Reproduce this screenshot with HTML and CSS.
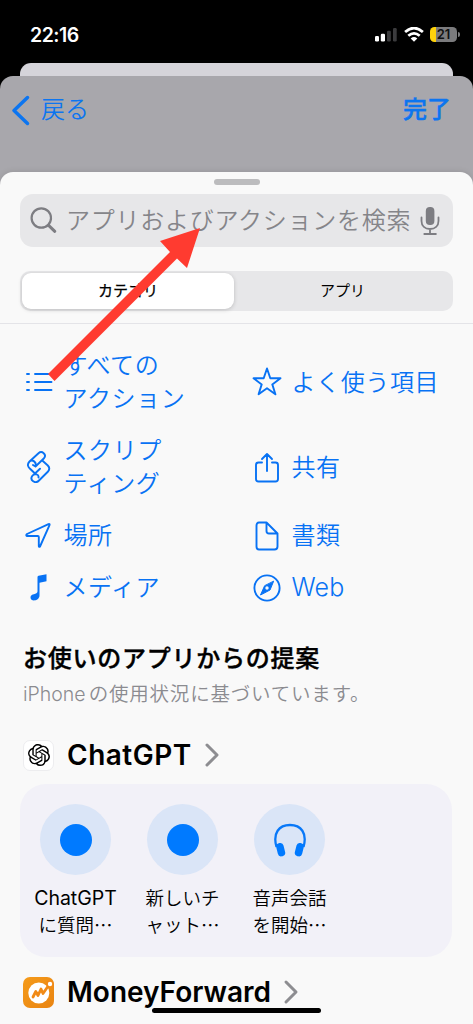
FILE: index.html
```html
<!DOCTYPE html>
<html lang="ja">
<head>
<meta charset="utf-8">
<meta name="viewport" content="width=device-width">
<title>ショートカット</title>
<link rel="stylesheet" href="styles.css">
</head>
<body>
<div class="screen">
  <header class="status">
    <span class="clock">22:16</span>
    <svg class="signal" width="22" height="15" viewBox="0 0 22 15"><rect y="9" width="4" height="5.500" rx="1.200" fill="#fff"/><rect x="5.800" y="6.800" width="4.200" height="7.700" rx="1.200" fill="#fff"/><rect x="12" y="3.800" width="3.800" height="10.700" rx="1.200" fill="#3b3b3d"/><rect x="18" y="1" width="3.700" height="13.500" rx="1.200" fill="#3b3b3d"/></svg>
    <svg class="wifi" width="20" height="15" viewBox="0 0 20 15" fill="none" stroke="#fff" stroke-width="2.700"><path d="M1.100 5.100Q10-3 18.900 5.100"/><path d="M4.300 8.800Q10 3.800 15.700 8.800"/><path d="M10 14.800 6.700 11.500Q10 8.700 13.300 11.500Z" fill="#fff" stroke="none"/></svg>
    <div class="battery"><span>21</span></div>
  </header>
  <div class="sheet-back"></div>
  <div class="card">
  <nav class="nav">
    <a class="back"><svg width="19" height="32" viewBox="0 0 19 32"><path d="M16.500 3.500 3 16.500 16.500 29.500" fill="none" stroke="currentColor" stroke-width="3.500" stroke-linecap="round" stroke-linejoin="round"/></svg><span>戻る</span></a>
    <a class="done">完了</a>
  </nav>
  <main class="sheet">
    <div class="grabber"></div>
    <div class="search">
      <svg width="28" height="28" viewBox="0 0 28 28" fill="none" stroke="#7d7d82" stroke-linecap="round"><circle cx="11.300" cy="11" r="9.700" stroke-width="2.200"/><path d="m18.600 18.300 6.200 6" stroke-width="3"/></svg>
      <span class="placeholder">アプリおよびアクションを検索</span>
      <svg class="mic" width="20" height="30" viewBox="0 0 20 30"><rect x="5.800" y="1" width="8.600" height="18" rx="4" fill="#7d7d82"/><path d="M1.500 11.500v3.500c0 5 3.500 8 8.500 8s8.500-3 8.500-8v-3.500M10 23v4.500M4.300 28h11.600" fill="none" stroke="#7d7d82" stroke-width="1.800" stroke-linecap="round"/></svg>
    </div>
    <div class="segments"><span class="segment selected">カテゴリ</span><span class="segment">アプリ</span></div>
    <section class="categories">
      <a class="category"><svg viewBox="0 0 32 32"><path d="M4 8h2M4 16h2M4 24h2M12 8h16.500M12 16h16.500M12 24h16.500"/></svg><span>すべての<br>アクション</span></a>
      <a class="category"><svg viewBox="0 0 32 32"><path d="m16 2.500 3.300 9.700 10.200.1-8.200 6.100 3.100 9.900-8.400-6-8.400 6 3.100-9.900-8.200-6.100 10.200-.1Z"/></svg><span>よく使う項目</span></a>
      <a class="category"><svg viewBox="0 0 32 32"><path d="M6.500 10.500 15.500 2.200c3.500-3 8.500 1.300 5.500 5L12.500 15.500M6.500 10.500c-2.800 3-1.500 5.500.8 7.500l4.700 4.500M6.500 10.500c2.800-2.500 7.500.5 6 5L10 14M19 9.300l5.800 5.200c2 2 2 4 0 6.300L16 29.500c-3.800 4-9.500-.5-6.800-4.500 2.300-3.200 7-1.500 6.300 1.500M12 22.500l5-4.800"/></svg><span>スクリプ<br>ティング</span></a>
      <a class="category"><svg viewBox="0 0 32 32"><path d="M11 11.500H7.500Q5 11.500 5 14v14Q5 30.500 7.500 30.500h17Q27 30.500 27 28V14q0-2.500-2.500-2.500H21M16 20V3M11 8l5-5 5 5"/></svg><span>共有</span></a>
      <a class="category"><svg viewBox="0 0 32 32"><path d="M4 14 25.500 4.100q1.600-.5 1 1.100L17 26.500q-1 1-1.200-.5V17q0-1-1-1H4q-1.500-.5 0-2Z"/></svg><span>場所</span></a>
      <a class="category"><svg viewBox="0 0 32 32"><path d="M8 2.500h7.500L26.500 13.500v13q0 3-3 3H8q-2.500 0-2.500-3v-21Q5.500 2.500 8 2.500ZM15.500 2.500V11q0 2.500 2.500 2.500h8.500"/></svg><span>書類</span></a>
      <a class="category"><svg viewBox="0 0 32 32"><path d="M14.500 5q0-1 1-1.200l8-1.500v7l-7 1.500V23.500c0 5.500-9 6.800-9 2C7.500 21 14.500 23 14.500 19.500Z" fill="currentColor" stroke="none"/></svg><span>メディア</span></a>
      <a class="category"><svg viewBox="0 0 32 32"><circle cx="16" cy="16" r="12.600"/><path d="M22.500 9.500 19 18l-9.500 5 4-9Z" fill="currentColor" stroke-width="1"/><circle cx="16" cy="16" r="1.700" fill="#f9f9f9" stroke="none"/></svg><span class="latin">Web</span></a>
    </section>
    <h2 class="heading">お使いのアプリからの提案</h2>
    <p class="note"><span>iPhone</span>の使用状況に基づいています。</p>
    <a class="app">
      <span class="app-icon gpt"><svg width="22" height="22" viewBox="0 0 24 24"><path d="M22.2819 9.8211a5.9847 5.9847 0 0 0-.5157-4.9108 6.0462 6.0462 0 0 0-6.5098-2.9A6.0651 6.0651 0 0 0 4.9807 4.1818a5.9847 5.9847 0 0 0-3.9977 2.9 6.0462 6.0462 0 0 0 .7427 7.0966 5.98 5.98 0 0 0 .511 4.9107 6.051 6.051 0 0 0 6.5146 2.9001A5.9847 5.9847 0 0 0 13.2599 24a6.0557 6.0557 0 0 0 5.7718-4.2058 5.9894 5.9894 0 0 0 3.9977-2.9001 6.0557 6.0557 0 0 0-.7475-7.0729zm-9.022 12.6081a4.4755 4.4755 0 0 1-2.8764-1.0408l.1419-.0804 4.7783-2.7582a.7948.7948 0 0 0 .3927-.6813v-6.7369l2.02 1.1686a.071.071 0 0 1 .038.052v5.5826a4.504 4.504 0 0 1-4.4945 4.4944zm-9.6607-4.1254a4.4708 4.4708 0 0 1-.5346-3.0137l.142.0852 4.783 2.7582a.7712.7712 0 0 0 .7806 0l5.8428-3.3685v2.3324a.0804.0804 0 0 1-.0332.0615L9.74 19.9502a4.4992 4.4992 0 0 1-6.1408-1.6464zM2.3408 7.8956a4.485 4.485 0 0 1 2.3655-1.9728V11.6a.7664.7664 0 0 0 .3879.6765l5.8144 3.3543-2.0201 1.1685a.0757.0757 0 0 1-.071 0l-4.8303-2.7865A4.504 4.504 0 0 1 2.3408 7.872zm16.5963 3.8558L13.1038 8.364 15.1192 7.2a.0757.0757 0 0 1 .071 0l4.8303 2.7913a4.4944 4.4944 0 0 1-.6765 8.1042v-5.6772a.79.79 0 0 0-.407-.667zm2.0107-3.0231l-.142-.0852-4.7735-2.7818a.7759.7759 0 0 0-.7854 0L9.409 9.2297V6.8974a.0662.0662 0 0 1 .0284-.0615l4.8303-2.7866a4.4992 4.4992 0 0 1 6.6802 4.66zM8.3065 12.863l-2.02-1.1638a.0804.0804 0 0 1-.038-.0567V6.0742a4.4992 4.4992 0 0 1 7.3757-3.4537l-.142.0805L8.704 5.459a.7948.7948 0 0 0-.3927.6813zm1.0976-2.3654l2.602-1.4998 2.6069 1.4998v2.9994l-2.5974 1.4997-2.6067-1.4997Z"/></svg></span>
      <span class="app-name wide">ChatGPT</span>
      <svg class="chevron" width="16" height="26" viewBox="0 0 16 26"><path d="m3 3 10 10L3 23"/></svg>
    </a>
    <section class="tiles">
      <a class="tile"><span class="bubble"><i class="dot"></i></span><span><span class="product">ChatGPT</span><br>に質問<b>⋯</b></span></a>
      <a class="tile"><span class="bubble"><i class="dot"></i></span><span>新しいチ<br>ャット<b>⋯</b></span></a>
      <a class="tile"><span class="bubble"><svg width="34" height="34" viewBox="0 0 34 34"><path d="M3.500 24C-.5 10 6 2 17 2s17.500 8 13.500 22" fill="none" stroke="#0878f8" stroke-width="2.300"/><rect x="4" y="20" width="7.500" height="13.500" rx="3.400" transform="rotate(-14 7.500 27)" fill="#007aff"/><rect x="22.500" y="20" width="7.500" height="13.500" rx="3.400" transform="rotate(14 26.500 27)" fill="#007aff"/></svg></span><span>音声会話<br>を開始<b>⋯</b></span></a>
    </section>
    <a class="app last">
      <span class="app-icon mf"><svg width="30" height="30" viewBox="0 0 30 30"><circle cx="14.800" cy="16" r="10.500" fill="#fff"/><circle cx="26" cy="7" r="3.800" fill="#f18a16"/><circle cx="26" cy="7" r="2.200" fill="#fff"/><path d="m9 20 2.800-5.500 2.200 4 3-6.500 2 4.500 4.500-6.500" fill="none" stroke="#f18a16" stroke-width="2.800" stroke-linecap="round" stroke-linejoin="round"/></svg></span>
      <span class="app-name">MoneyForward</span>
      <svg class="chevron" width="16" height="26" viewBox="0 0 16 26"><path d="m3 3 10 10L3 23"/></svg>
    </a>
  </main>
  </div>
  <div class="home"></div>
  <svg class="arrow" width="160" height="160" viewBox="0 0 160 160"><path d="M8 154 130 32 120 21 160 8 147 48 137 38.500 14.500 161Z" fill="#ff3b30"/></svg>
</div>
</body>
</html>
```
FILE: styles.css
```css
* { box-sizing: border-box; }
body { margin: 0; background: #000; }
.screen {
  position: relative;
  width: 473px;
  height: 1024px;
  overflow: hidden;
  background: #000;
  font-family: Inter, "Noto Sans CJK JP", sans-serif;
}
svg { display: block; flex: none; }
.status { display: flex; align-items: center; height: 63px; padding: 6px 16px 0 30px; }
.clock { flex: 1; color: #fff; font-size: 19.500px; font-weight: 600; letter-spacing: -0.500px; }
.wifi { margin: 0 6px 0 7px; }
.battery {
  position: relative;
  width: 27px;
  height: 15px;
  border-radius: 4.500px;
  background: linear-gradient(90deg, #fdd10b 6px, #7b7b7d 6px);
  color: #111;
  font-size: 13px;
  font-weight: 600;
  line-height: 15px;
  text-align: center;
}
.battery::after { content: ""; position: absolute; left: 28px; top: 5px; width: 2px; height: 5px; border-radius: 0 2px 2px 0; background: #7b7b7d; }
.sheet-back { height: 13px; margin: 0 20px; border-radius: 11px 11px 0 0; background: #d5d4da; }
.card { height: 948px; overflow: hidden; border-radius: 13px 13px 0 0; background: #a8a7ac; }
.nav {
  display: flex;
  justify-content: space-between;
  height: 96px;
  padding: 17px 22px 0 11px;
  color: #0c75f0;
  font-size: 24px;
  line-height: 32px;
}
.back { display: flex; align-items: center; gap: 11px; height: 34px; font-weight: 350; }
.done { height: 34px; padding-top: 1px; font-weight: 500; -webkit-text-stroke: .4px currentColor; }
.sheet {
  height: 852px;
  border-radius: 13px 13px 0 0;
  background: #f9f9f9;
  box-shadow: 0 0 6px rgba(0, 0, 0, .12);
}
.sheet::before { content: ""; display: block; height: 7px; }
.grabber { width: 46px; height: 6px; margin: 0 auto; border-radius: 3px; background: #bcbcbe; }
.search {
  display: flex;
  align-items: center;
  height: 53px;
  margin: 9px 20px 0;
  padding: 0 13px 0 10px;
  border-radius: 13px;
  background: #e7e7e9;
}
.placeholder { flex: 1; margin-left: 8px; color: #858589; font-size: 24px; font-weight: 350; line-height: 35px; letter-spacing: .75px; white-space: nowrap; }
.segments {
  display: flex;
  height: 40px;
  margin: 24px 20px 0;
  padding: 2px;
  border-radius: 10px;
  background: #e7e7e9;
}
.segment { flex: 1; font-size: 15px; line-height: 36px; text-align: center; }
.selected { flex: 0 0 212px; border-radius: 9px; background: #fff; box-shadow: 0 1px 4px rgba(0, 0, 0, .18); -webkit-text-stroke: .25px currentColor; }
.categories {
  display: grid;
  grid-template-columns: 228px 1fr;
  grid-template-rows: 66px 66px 33px 33px;
  row-gap: 19px;
  align-items: center;
  margin-top: 12px;
  padding: 25px 0 0 23px;
  border-top: 1px solid #e4e4e8;
  color: #0872f4;
  font-size: 24px;
  font-weight: 350;
  line-height: 33px;
}
.category { display: flex; align-items: center; gap: 9px; letter-spacing: .6px; white-space: nowrap; }
.category svg { width: 32px; height: 32px; fill: none; stroke: currentColor; stroke-width: 1.900; stroke-linecap: round; stroke-linejoin: round; }
.category svg + span { margin-left: -0.500px; }
.category .latin { font-size: 25px; letter-spacing: .2px; }
.heading { margin: 38px 0 0 23px; font-size: 24px; font-weight: 500; line-height: 34px; letter-spacing: .75px; -webkit-text-stroke: .4px currentColor; }
.note { margin: 2px 0 0 23px; color: #8b8b90; font-size: 19.500px; font-weight: 350; line-height: 32px; letter-spacing: .8px; }
.note span { margin-right: 3px; letter-spacing: 0; }
.app { display: flex; align-items: center; height: 40px; margin: 25px 0 0 23px; }
.app-icon { display: grid; place-items: center; width: 31px; height: 31px; border-radius: 7px; }
.gpt { border: 1px solid #ededef; background: #fff; }
.mf { background: linear-gradient(135deg, #f59b1a, #e98412); }
.app-name { margin-left: 13px; font-size: 28px; font-weight: 600; line-height: 40px; }
.wide { letter-spacing: .5px; }
.chevron { margin-left: 12px; fill: none; stroke: #8d8d91; stroke-width: 3; stroke-linecap: round; stroke-linejoin: round; }
.tiles { display: flex; height: 173px; margin: 9px 21px 0 20px; padding: 20px 0 0 2px; border-radius: 26px; background: #f2f1f8; }
.tile { display: flex; flex-direction: column; align-items: center; width: 107px; font-size: 18.500px; font-weight: 350; line-height: 27px; text-align: center; white-space: nowrap; }
.tile b { font-weight: 400; }
.product { font-size: 19.500px; font-weight: 400; line-height: 26px; }
.bubble { display: grid; place-items: center; width: 71px; height: 71px; margin-bottom: 10px; border-radius: 50%; background: #dae5f7; }
.dot { width: 32px; height: 32px; border-radius: 50%; background: #007aff; }
.last { margin-top: 15px; }
.home { position: absolute; left: 152px; top: 1008px; width: 169px; height: 5px; border-radius: 3px; background: #000; }
.arrow { position: absolute; left: 40px; top: 220px; overflow: visible; }
```
